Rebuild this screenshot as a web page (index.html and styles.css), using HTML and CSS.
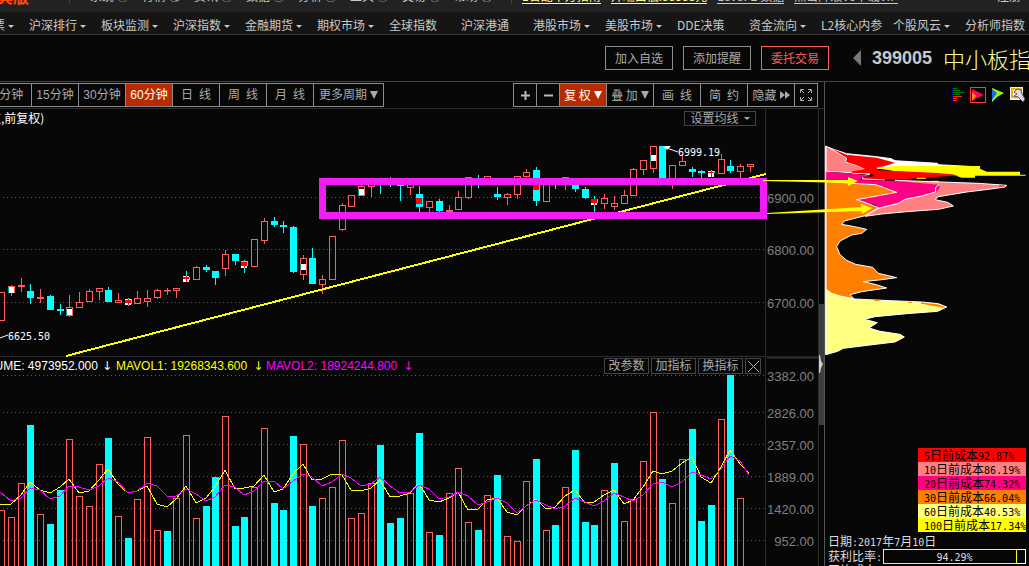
FILE: index.html
```html
<!DOCTYPE html>
<html lang="zh-CN">
<head>
<meta charset="utf-8">
<title>中小板指 399005</title>
<link rel="stylesheet" href="styles.css">
</head>
<body>
<header class="menubar">
  <div class="brand">经典版</div>
  <nav class="menus">
    <a href="#">系统 Ⓢ</a><a href="#">行情 Ⓠ</a><a href="#">资讯 Ⓘ</a><a href="#">数据 Ⓓ</a><a href="#">分析 Ⓐ</a><a href="#">工具 Ⓣ</a><a href="#">交易 Ⓔ</a><a href="#">帮助 Ⓗ</a>
  </nav>
  <div class="promos">
    <a class="hot" href="#">1官配中方指南</a><a class="hot" href="#">开端口低.88888元</a><a href="#">Level-2 数据</a><a href="#">点击降级V6下载VIP</a>
  </div>
  <a class="register" href="#">注册</a>
</header>
<nav class="navbar">
  <a class="drop" href="#">自选股票</a><a class="drop" href="#">沪深排行</a><a class="drop" href="#">板块监测</a><a class="drop" href="#">沪深指数</a><a class="drop" href="#">金融期货</a><a class="drop" href="#">期权市场</a><a href="#">全球指数</a><a href="#">沪深港通</a><a class="drop" href="#">港股市场</a><a class="drop" href="#">美股市场</a><a href="#">DDE决策</a><a class="drop" href="#">资金流向</a><a href="#">L2核心内参</a><a class="drop" href="#">个股风云</a><a href="#">分析师指数</a>
</nav>
<section class="quote">
  <div class="actions">
    <button>加入自选</button><button>添加提醒</button><button class="trade">委托交易</button>
  </div>
  <div class="symbol">
    <button class="prev" aria-label="上一个"><svg width="8" height="16"><path d="M8 0v16L0 8z" fill="#777"/></svg></button>
    <strong>399005</strong><h1>中小板指</h1>
  </div>
</section>
<main class="workspace">
  <div class="left">
    <div class="toolbar">
      <div class="group periods">
        <button>5分钟</button><button>15分钟</button><button>30分钟</button><button class="on">60分钟</button><button>日&ensp;线</button><button>周&ensp;线</button><button>月&ensp;线</button><button class="more">更多周期<i class="tri"></i></button>
      </div>
      <div class="group tools">
        <button class="sq" aria-label="放大"><svg width="9" height="9"><path d="M0 4.500h9M4.500 0v9" stroke="#bbb" stroke-width="2"/></svg></button>
        <button class="sq" aria-label="缩小"><svg width="9" height="9"><path d="M0 4.500h9" stroke="#bbb" stroke-width="2"/></svg></button>
        <button class="on">复 权<i class="tri"></i></button><button>叠 加<i class="tri"></i></button><button>画&ensp;线</button><button>简&ensp;约</button>
        <button>隐藏<svg width="10" height="8"><path d="M0 0l5 4-5 4zM5 0l5 4-5 4z" fill="#aaa"/></svg></button>
        <button class="sq" aria-label="全屏"><svg width="12" height="12" fill="none" stroke="#aaa"><path d="M.5 4V.5H4M1 1l3 3M8 .5h3.500V4M11 1L8 4M.5 8v3.500H4M1 11l3-3M8 11.500h3.500V8M11 11L8 8"/></svg></button>
      </div>
    </div>
    <div class="charts">
      <div class="plots">
        <div class="bar price-bar"><span>数,前复权)</span><button class="ma drop">设置均线</button></div>
        <svg id="price" class="plot price" viewBox="0 127 765 229" preserveAspectRatio="xMaxYMin meet"></svg>
        <div class="bar volume-bar">
          <span class="vol"><span>VOLUME: 4973952.000</span><b>↓</b></span><span class="m1">MAVOL1: 19268343.600<b>↓</b></span><span class="m2">MAVOL2: 18924244.800<b>↓</b></span>
          <div class="indicator-buttons"><button>改参数</button><button>加指标</button><button>换指标</button><button class="close" aria-label="关闭"><svg width="11" height="11"><path d="M0 0l11 11M11 0L0 11" stroke="#aaa"/></svg></button></div>
        </div>
        <svg id="volume" class="plot volume" viewBox="0 375 765 191" preserveAspectRatio="xMaxYMin meet"></svg>
      </div>
      <svg class="axis" viewBox="766 109 52 457" width="52" height="457">
        <path d="M767 357.500h51" stroke="#333" stroke-width="2"/>
        <g text-anchor="end" class="axis-text">
          <text x="814" y="203">6900.00</text><text x="814" y="255">6800.00</text><text x="814" y="308">6700.00</text>
          <text x="814" y="381">3382.00</text><text x="814" y="418">2826.00</text><text x="814" y="450">2357.00</text><text x="814" y="482">1889.00</text><text x="814" y="514">1420.00</text><text x="814" y="546">952.00</text>
        </g>
      </svg>
      <svg class="scroll" viewBox="818 109 6 457" width="6" height="457">
        <path d="M818.500 109v457" stroke="#2c2c2c"/><path d="M819 304h5v121h-5z" fill="#3e3e3e"/>
        <path d="M819 355l1 0 1 6 2 3-2 4-1 5h-1z" fill="#d0d0d0"/>
      </svg>
    </div>
  </div>
  <aside class="cost">
    <div class="cost-tools">
      <button aria-label="筹码分布"><svg width="12" height="15"><path d="M.5 0v15" stroke="#000080"/><path d="M1 1.500h4M1 3.500h7M1 5.500h11M1 7.500h7" stroke="#008000"/><path d="M1 9.500h9M1 11.500h4M1 13.500h4" stroke="#f20"/></svg></button>
      <button class="picked" aria-label="远期成本"><svg width="14" height="14"><path d="M1 1l12 6-7 3-5 3z" fill="#ff0060"/><path d="M1 4l4 4-4 5z" fill="#ff9000"/></svg></button>
      <button aria-label="近期成本"><svg width="12" height="14"><path d="M0 0l12 5-7 4-5 5z" fill="#90ff00"/><path d="M0 1l5 4-5 7z" fill="#2060ff"/></svg></button>
      <button aria-label="设置"><svg width="15" height="15"><path d="M0 0h13v13H0z" fill="#eee"/><path d="M1 1h11v10H1z" fill="#fa0"/><path d="M3 3h6v6H3z" fill="#fff"/><path d="M4 5l3-3 4 1 1 4 3 5-2 3-5-5-4-1 3-2z" fill="#ddd" stroke="#555"/></svg></button>
    </div>
    <svg class="distribution" viewBox="825 109 204 339" preserveAspectRatio="xMinYMin meet">
      <g transform="translate(815 130) scale(.33333)" stroke="#fff" stroke-width="3" stroke-linejoin="round">
        <path fill="#fff" d="M33 50L95 71 185 80 228 86 240 92 368 100 368 104 495 111 240 112 180 116z"/>
        <path fill="#ff0" stroke="none" d="M185 115L240 108H495V116L515 125H615V134H632V137H480V143H440L415 134 240 124z"/>
        <path fill="#ff8080" d="M33 48L66 67 95 84 92 96 120 104 150 116 110 128 33 124z"/>
        <path fill="#f00" stroke="none" d="M48 55L95 74 185 83 240 98 210 108 185 113 190 121 370 129 430 136 335 143 240 149 145 147 142 143 180 138 168 131 110 129 112 124 150 117 130 107 94 95 98 85z"/>
        <path d="M110 130L165 132 145 138 142 147 210 150" fill="none"/>
        <path d="M305 145h28M348 154h24" stroke="#ff0"/>
        <path fill="#ff8080" d="M240 151L350 155 490 160 575 166 570 171 520 178 455 186 370 200 360 209 398 217 415 228 370 238 275 245 200 252 150 259 190 235 270 208 360 185z"/>
        <path fill="#ff0084" stroke="none" d="M33 125L105 130 170 138 140 142 135 150 240 152 370 164 375 170 365 187 320 198 270 208 250 220 190 235 180 224 120 209 180 195 230 188 210 172 110 160 33 156z"/>
        <path d="M372 164l-10 8v14l-42 12-50 10-20 12-60 15" fill="none"/>
        <path fill="#ff8000" d="M33 154L110 160 180 164 205 172 225 180 245 187 180 199 124 209 145 216 168 224 190 233 150 257 115 266 88 273 80 283 118 290 155 298 140 310 110 315 75 333 65 350 75 374 95 391 122 403 173 412 190 430 245 443 200 449 145 455 180 463 215 474 140 485 105 494 115 504 70 520 33 480z"/>
        <path fill="#ffff80" d="M33 478L50 490 75 498 120 507 225 512 320 516 370 521 395 531 368 544 275 551 180 560 148 568 187 578 162 594 195 604 255 613 268 621 240 636 165 645 85 655 68 664 33 674z"/>
        <path d="M280 517h12M318 519l52 6 18 7-40-7z" fill="#ff8000" stroke="#ff8000"/>
        <path d="M177 511h16" stroke="#ff8000"/><path d="M552 168h16" stroke="#f00"/>
        <path d="M32 48V674" fill="none"/>
      </g>
    </svg>
    <ul class="legend">
      <li class="d5"><b>5</b>日前成本<b>92.87%</b></li><li class="d10"><b>10</b>日前成本<b>86.19%</b></li><li class="d20"><b>20</b>日前成本<b>74.32%</b></li><li class="d30"><b>30</b>日前成本<b>66.04%</b></li><li class="d60"><b>60</b>日前成本<b>40.53%</b></li><li class="d100"><b>100</b>日前成本<b>17.34%</b></li>
    </ul>
    <div class="stats">
      <div>日期<b>:2017</b>年<b>7</b>月<b>10</b>日</div>
      <div class="ratio"><span>获利比率<b>:</b></span><div class="meter"><b>94.29%</b></div></div>
      <div class="average">平均成本<b>:6764.87</b></div>
    </div>
  </aside>
</main>
<script src="chart.js"></script>
</body>
</html>
```
FILE: styles.css
```css
* { box-sizing: border-box; }
body {
  margin: 0; height: 100vh; overflow: hidden; display: flex; flex-direction: column;
  background: #070707; color: #c8c8c8;
  font: 12px/16px "Noto Sans CJK SC", sans-serif; white-space: nowrap;
}
a { color: inherit; text-decoration: none; }
button {
  display: flex; align-items: center; justify-content: center;
  margin: 0; padding: 0; border: 1px solid #8c8c8c; background: none; color: #aaa;
  font: inherit; flex: none; white-space: nowrap;
}
.drop::after {
  content: ""; display: inline-block; margin-left: 3px; vertical-align: middle;
  border: 3px solid transparent; border-top-color: currentColor; border-bottom: 0;
}
.menubar {
  flex: none; height: 12px; overflow: hidden; display: flex; align-items: flex-end;
  padding-bottom: 8px; background: #222;
}
.brand { width: 89px; margin-left: -19px; flex: none; color: #ff4b10; font-size: 16px; font-weight: bold; border-right: 1px solid #444; }
.menus { display: flex; margin-left: 20px; border-right: 1px solid #444; }
.menus a { width: 52px; }
.menus a:last-child { width: 57px; }
.promos { display: flex; gap: 10px; margin-left: 10px; }
.promos a { border-bottom: 1px solid; line-height: 14px; }
.promos .hot { color: #ffff80; }
.register { margin: 0 8px 0 auto; }
.navbar {
  flex: none; display: flex; height: 23px; overflow: hidden; background: #151515;
  border-bottom: 1px solid #3a3a3a; line-height: 26px;
}
.navbar a { flex: none; width: 72px; }
.navbar a:first-child { margin-left: -43px; }
.quote { flex: none; height: 46px; display: flex; justify-content: flex-end; align-items: center; }
.actions { display: flex; gap: 10px; }
.actions button { width: 68px; height: 24px; }
.actions .trade { color: #ff5c5c; border-color: #ff5c5c; }
.symbol { display: flex; align-items: center; width: 176px; margin-left: 24px; gap: 11px; overflow: hidden; }
.symbol .prev { border: 0; }
.symbol strong { font: bold 18px/24px "Liberation Sans", sans-serif; }
.symbol h1 { margin: 0; font-size: 22px; font-weight: 300; line-height: 24px; color: #ffff99; }
.workspace { flex: 1; min-height: 0; display: flex; border-top: 1px solid #444; }
.left { flex: 1; min-width: 0; }
.toolbar { display: flex; justify-content: space-between; height: 27px; padding: 1px 6px 0 0; border-bottom: 1px solid #2c2c2c; }
.group { display: flex; }
.group button { width: 48px; height: 24px; margin-left: -1px; color: #aaa; gap: 3px; }
.periods { margin-left: -15px; }
.periods button { font-family: "Liberation Sans", "Noto Sans CJK SC", sans-serif; }
.group .more { width: 71px; }
.group .sq { width: 24px; }
.group .on { background: #b62c00; color: #fff; }
.tri { border: 4px solid transparent; border-top: 8px solid currentColor; border-bottom: 0; }
.charts { display: flex; }
.plots { flex: 1; min-width: 0; border-right: 1px solid #2c2c2c; }
.plot { display: block; width: 100%; overflow: visible; position: relative; }
.price { height: 229px; z-index: 2; }
.volume { height: 191px; }
.bar { display: flex; height: 18px; align-items: center; }
.price-bar { justify-content: space-between; color: #fff; padding-right: 9px; }
.price-bar span { margin-left: -11px; }
.ma { width: 72px; height: 15px; border-color: #444; line-height: 12px; gap: 2px; }
.volume-bar { height: 19px; border-top: 1px solid #2c2c2c; font-family: "Liberation Sans", "Noto Sans CJK SC", sans-serif; padding-right: 4px; }
.volume-bar > span { display: flex; width: 150px; flex: none; gap: 6px; }
.volume-bar .vol { width: 116px; gap: 4px; color: #fff; justify-content: flex-end; padding-right: 4px; }
.volume-bar b { font: 12px/16px "DejaVu Sans", sans-serif; }
.m1 { color: #ff0; }
.m2 { color: #f0f; }
.indicator-buttons { display: flex; gap: 2px; margin-left: auto; }
.indicator-buttons button { width: 45px; height: 16px; border-color: #444; line-height: 12px; }
.indicator-buttons .close { width: 16px; }
.axis, .scroll { flex: none; display: block; }
.axis-text { font: 13px "Liberation Sans", sans-serif; fill: #808080; }
.up { fill: none; stroke: #ff5c5c; }
.down { fill: #0ff; }
.wick-up { stroke: #ff5c5c; }
.wick-down { stroke: #0ff; }
.grid { stroke: #5a5a5a; stroke-dasharray: 1 3; }
.tag { font: 10px "DejaVu Sans Mono", monospace; fill: #fff; }
.cost { flex: none; width: 205px; border-left: 1px solid #555; overflow: hidden; }
.cost-tools { display: flex; height: 27px; align-items: center; justify-content: flex-end; gap: 6px; padding: 0 4px 2px 0; }
.cost-tools button { border: 0; height: 16px; }
.cost-tools .picked { border: 1px solid #ff3838; width: 16px; }
.distribution { display: block; width: 100%; height: 339px; }
.legend { list-style: none; width: 108px; margin: 0 3px 2px auto; padding: 0; color: #000; overflow: hidden; }
.legend li { height: 14px; line-height: 14px; padding-left: 6px; }
.legend b, .stats b { font: 10px/12px "DejaVu Sans Mono", monospace; }
.d5 { background: #f00; }
.d10 { background: #ff8080; }
.d20 { background: #ff0080; }
.d30 { background: #ff8000; }
.d60 { background: #ffff80; }
.d100 { background: #ff0; padding-right: 0; }
.stats { line-height: 13px; padding-left: 3px; color: #ddd; }
.ratio { display: flex; height: 15px; padding-right: 3px; gap: 1px; }
.average { line-height: 12px; }
.meter { flex: 1; border: 1px solid #fff; line-height: 12px; text-align: center; border-image: linear-gradient(to right, #ff0 93%, #fff 93%) 1; background: linear-gradient(#ff0, #ff0) 94% 0 / 1px 100% no-repeat; }
```
FILE: chart.js
```js
// Candles: [left, direction, high, low, body top, body bottom]
const candles = [
[-2,'u',292,321,292,321],[8,'u',285,296,286,293],[18,'u',278,292,285,287],[27,'d',284,304,291,298],[37,'u',289,303,297,299],
[47,'d',295,310,296,310],[57,'d',304,315,309,311],[66,'u',295,317,307,316],[76,'u',292,308,302,308],[86,'u',289,302,291,302],
[96,'u',288,300,288,292],[105,'d',287,302,290,302],[115,'u',293,303,300,303],[125,'d',298,306,299,304],[134,'u',291,304,298,304],
[144,'u',290,307,298,302],[154,'u',289,299,290,298],[164,'u',288,295,290,291],[173,'u',288,298,288,291],[183,'d',271,282,277,280],
[193,'u',266,280,267,280],[203,'d',265,272,267,270],[212,'d',271,285,271,278],[222,'u',250,276,254,269],[232,'d',254,265,254,261],
[241,'d',260,273,261,266],[251,'u',239,267,239,267],[261,'u',218,244,221,241],[271,'d',217,227,221,225],[280,'d',221,233,225,227],
[290,'d',226,273,227,272],[300,'u',255,280,258,275],[309,'d',248,284,258,284],[319,'u',275,294,279,285],[329,'u',236,280,236,280],
[339,'u',203,231,205,230],[348,'u',195,207,195,207],[358,'u',183,196,186,196],[368,'u',180,197,180,187],[377,'d',180,194,180,183],
[387,'d',177,187,180,183],[397,'d',180,201,182,186],[407,'u',178,195,178,188],[416,'d',186,212,194,207],[426,'u',201,212,201,208],
[436,'d',199,212,201,211],[446,'u',205,212,210,212],[455,'u',191,210,197,210],[465,'u',177,199,177,198],[475,'d',175,188,180,183],
[484,'u',176,181,176,181],[494,'d',187,200,194,197],[504,'u',193,205,194,198],[514,'u',176,199,176,195],[523,'u',169,179,172,177],
[533,'d',167,206,170,201],[543,'u',180,202,180,202],[552,'d',180,189,180,183],[562,'u',177,190,177,182],[572,'d',180,192,180,189],
[582,'d',187,199,189,198],[591,'d',196,212,199,203],[601,'u',194,209,198,204],[611,'u',196,210,203,207],[621,'u',190,204,195,204],
[630,'u',168,196,169,196],[640,'u',160,175,160,170],[650,'u',146,173,146,169],[659,'d',146,179,146,179],[669,'u',165,189,165,183],
[679,'u',154,166,161,166],[689,'d',167,177,169,172],[698,'d',170,178,171,173],[708,'d',170,177,171,173],[718,'u',154,174,159,174],
[727,'d',160,173,166,171],[737,'u',164,178,166,172],[747,'u',164,172,164,167]];
// Volume: [left, direction, top]
const volumes = [
[-2,'u',510],[8,'u',517],[18,'u',483],[27,'d',425],[37,'u',514],[47,'d',524],[57,'d',490],[66,'u',439],[76,'u',496],[86,'u',506],
[96,'u',464],[105,'d',438],[115,'u',516],[125,'d',538],[134,'u',499],[144,'u',437],[154,'u',530],[164,'d',531],[173,'u',498],[183,'u',435],
[193,'u',518],[203,'d',506],[212,'d',477],[222,'u',416],[232,'d',526],[241,'d',517],[251,'u',487],[261,'u',428],[271,'d',503],[280,'d',510],
[290,'d',436],[300,'u',444],[309,'d',506],[319,'u',498],[329,'u',487],[339,'u',440],[348,'u',518],[358,'u',513],[368,'u',483],[377,'d',445],
[387,'d',523],[397,'d',518],[407,'u',493],[416,'d',433],[426,'u',532],[436,'d',535],[446,'u',493],[455,'u',468],[465,'u',522],[475,'d',530],
[484,'u',495],[494,'d',475],[504,'u',536],[514,'u',541],[523,'u',481],[533,'d',459],[543,'u',530],[552,'d',525],[562,'u',487],[572,'d',450],
[582,'d',522],[591,'d',525],[601,'u',490],[611,'d',463],[621,'u',521],[630,'u',499],[640,'u',461],[650,'u',412],[659,'d',479],[669,'u',503],
[679,'u',459],[689,'d',429],[698,'d',521],[708,'d',505],[718,'u',419],[727,'d',375],[737,'u',498]];
const ma1 = '0,504 11,504 21,495 30,482 40,490 50,493 60,487 69,479 79,493 89,491 99,480 108,469 118,484 128,493 137,491 147,486 157,504 167,507 176,499 186,486 196,503 206,498 215,487 225,470 235,489 244,488 254,486 264,475 274,492 283,489 293,474 303,464 312,480 322,479 332,474 342,475 351,490 361,491 371,488 380,480 390,497 400,496 410,493 419,483 429,500 439,502 449,498 458,492 468,510 478,509 487,500 497,498 507,512 517,515 526,506 536,499 546,509 555,507 565,496 575,490 585,503 594,502 604,495 614,490 624,504 633,500 643,487 653,471 662,474 672,471 682,463 692,457 701,477 711,483 721,467 730,450 740,464 749,473';
const ma2 = '0,492 11,501 21,498 30,488 40,490 50,499 60,496 69,486 79,487 89,490 99,486 108,478 118,482 128,493 137,491 147,483 157,486 167,496 176,496 186,489 196,494 206,501 215,497 225,485 235,487 244,495 254,491 264,481 274,481 283,489 293,481 303,474 312,477 322,486 332,482 342,474 351,478 361,486 371,484 380,477 390,486 400,493 410,492 419,485 429,489 439,499 449,497 458,492 468,496 478,505 487,502 497,498 507,503 517,513 526,506 536,500 546,505 555,509 565,506 575,498 585,502 594,506 604,501 614,493 624,497 633,501 643,495 653,484 662,482 672,487 682,482 692,472 701,475 711,479 721,469 730,456 740,461 749,475';
const whiteMarks = [[8,287,293],[66,309,315],[300,264,270],[358,189,195],[650,155,161]];
const redMarks = [[125,299,305,300,303],[183,276,282,277,279],[241,262,268,262,266],[416,198,204,198,204],[533,185,190,185,190],[591,199,205,199,203],[708,171,177,172,173]];

const box = (x, dir, top, bottom) => dir === 'u'
  ? `<rect class="up" x="${x + .5}" y="${top + .5}" width="6" height="${Math.max(bottom - top - 1, .5)}"/>`
  : `<rect class="down" x="${x}" y="${top}" width="7" height="${bottom - top}"/>`;
const grid = ys => ys.map(y => `<path class="grid" d="M3 ${y + .5}H765"/>`).join('');

let price = grid([197, 249, 302]);
for (const [x, dir, high, low, top, bottom] of candles) {
  const wick = dir === 'u' ? `M${x + 3.5} ${high}V${top}M${x + 3.5} ${bottom}V${low}` : `M${x + 3.5} ${high}V${low}`;
  price += `<path class="wick-${dir === 'u' ? 'up' : 'down'}" d="${wick}"/>` + box(x, dir, top, bottom);
}
for (const [x, top, bottom] of whiteMarks)
  price += `<path d="M${x} ${top}h2v${bottom - top}h-2z" fill="#00a0a0"/><path d="M${x + 1} ${top}h5v${bottom - top}h-5z" fill="#fff"/>`;
for (const [x, top, bottom, r1, r2] of redMarks)
  price += `<path d="M${x} ${top}h6v${bottom - top}h-6z" fill="#fff"/><path d="M${x} ${r1}h6v${r2 - r1}h-6zM${x + 3} ${top}h1v${bottom - top}h-1z" fill="#f00"/>`;
price += `
<path d="M66 356L766 174" stroke="#ff0" stroke-width="2" shape-rendering="crispEdges"/>
<rect x="322.5" y="181.5" width="441" height="34" fill="none" stroke="#f41cf4" stroke-width="7"/>
<g fill="#ff0"><path d="M763 180l86 0v3l-86-2zM848 177l10 4-10 5z"/><path d="M767 213l95-6v4l-95 3zM861 204l11 4-10 6z"/></g>
<path d="M664 147l14 5M0 338l8-3" stroke="#fff"/><path d="M664 146h7l-4 4z" fill="#fff"/>
<text class="tag" x="678" y="156">6999.19</text><text class="tag" x="8" y="340">6625.50</text>`;
document.getElementById('price').innerHTML = price;

document.getElementById('volume').innerHTML = grid([375, 412, 444, 476, 508, 540])
  + volumes.map(([x, dir, top]) => box(x, dir, top, 570)).join('')
  + `<polyline points="${ma1}" fill="none" stroke="#ff0" shape-rendering="crispEdges"/>
<polyline points="${ma2}" fill="none" stroke="#f0f" shape-rendering="crispEdges"/>`;
```
